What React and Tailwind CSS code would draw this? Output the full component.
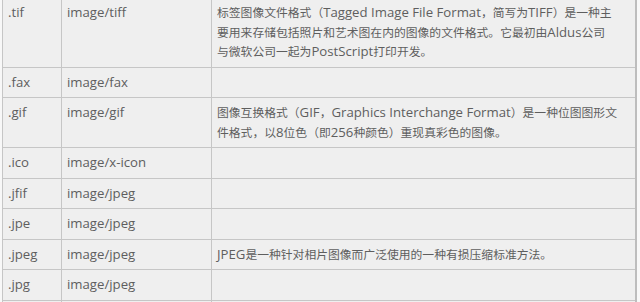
function Mixed({ text }) {
  const parts = text.split(/([\u3000-\u303f\u4e00-\u9fff\uff00-\uffef]+)/);
  return (
    <>
      {parts.map((p, i) =>
        i % 2 === 1 ? (
          <span key={i} className="text-[11.8px]">{p}</span>
        ) : (
          <span key={i}>{p}</span>
        )
      )}
    </>
  );
}

export default function App() {
  const rows = [
    { ext: ".tif", mime: "image/tiff", desc: [
      "标签图像文件格式（Tagged Image File Format，简写为TIFF）是一种主",
      "要用来存储包括照片和艺术图在内的图像的文件格式。它最初由Aldus公司",
      "与微软公司一起为PostScript打印开发。",
    ] },
    { ext: ".fax", mime: "image/fax", desc: [] },
    { ext: ".gif", mime: "image/gif", desc: [
      "图像互换格式（GIF，Graphics Interchange Format）是一种位图图形文",
      "件格式，以8位色（即256种颜色）重现真彩色的图像。",
    ] },
    { ext: ".ico", mime: "image/x-icon", desc: [] },
    { ext: ".jfif", mime: "image/jpeg", desc: [] },
    { ext: ".jpe", mime: "image/jpeg", desc: [] },
    { ext: ".jpeg", mime: "image/jpeg", desc: ["JPEG是一种针对相片图像而广泛使用的一种有损压缩标准方法。"] },
    { ext: ".jpg", mime: "image/jpeg", desc: [] },
    { ext: "", mime: "", desc: [] },
  ];
  return (
    <div className="w-[640px] h-[302px] overflow-hidden bg-[#f8f8f8]">
      <table
        className="ml-[2px] mt-[-3px] border-collapse border-r-2 border-r-[#bdbdbd] bg-[#efefef] text-[13.2px] leading-[19.5px] text-[#5e5e5e]"
        style={{ fontFamily: '"Open Sans", "Noto Sans CJK SC", sans-serif' }}
      >
        <tbody>
          {rows.map((r, i) => (
            <tr key={i}>
              <td className="w-[59px] border border-[#c6c6c6] px-[5px] py-[5px] align-top whitespace-nowrap">{r.ext || "\u00a0"}</td>
              <td className="w-[150px] border border-[#c6c6c6] px-[5px] py-[5px] align-top whitespace-nowrap">{r.mime || "\u00a0"}</td>
              <td className="w-[424px] border border-[#c6c6c6] pl-[5px] pr-0 py-[5px] align-top whitespace-nowrap">
                {r.desc.length ? (
                  r.desc.map((l, j) => (
                    <div key={j}>
                      <Mixed text={l} />
                    </div>
                  ))
                ) : (
                  <div>&nbsp;</div>
                )}
              </td>
            </tr>
          ))}
        </tbody>
      </table>
    </div>
  );
}
